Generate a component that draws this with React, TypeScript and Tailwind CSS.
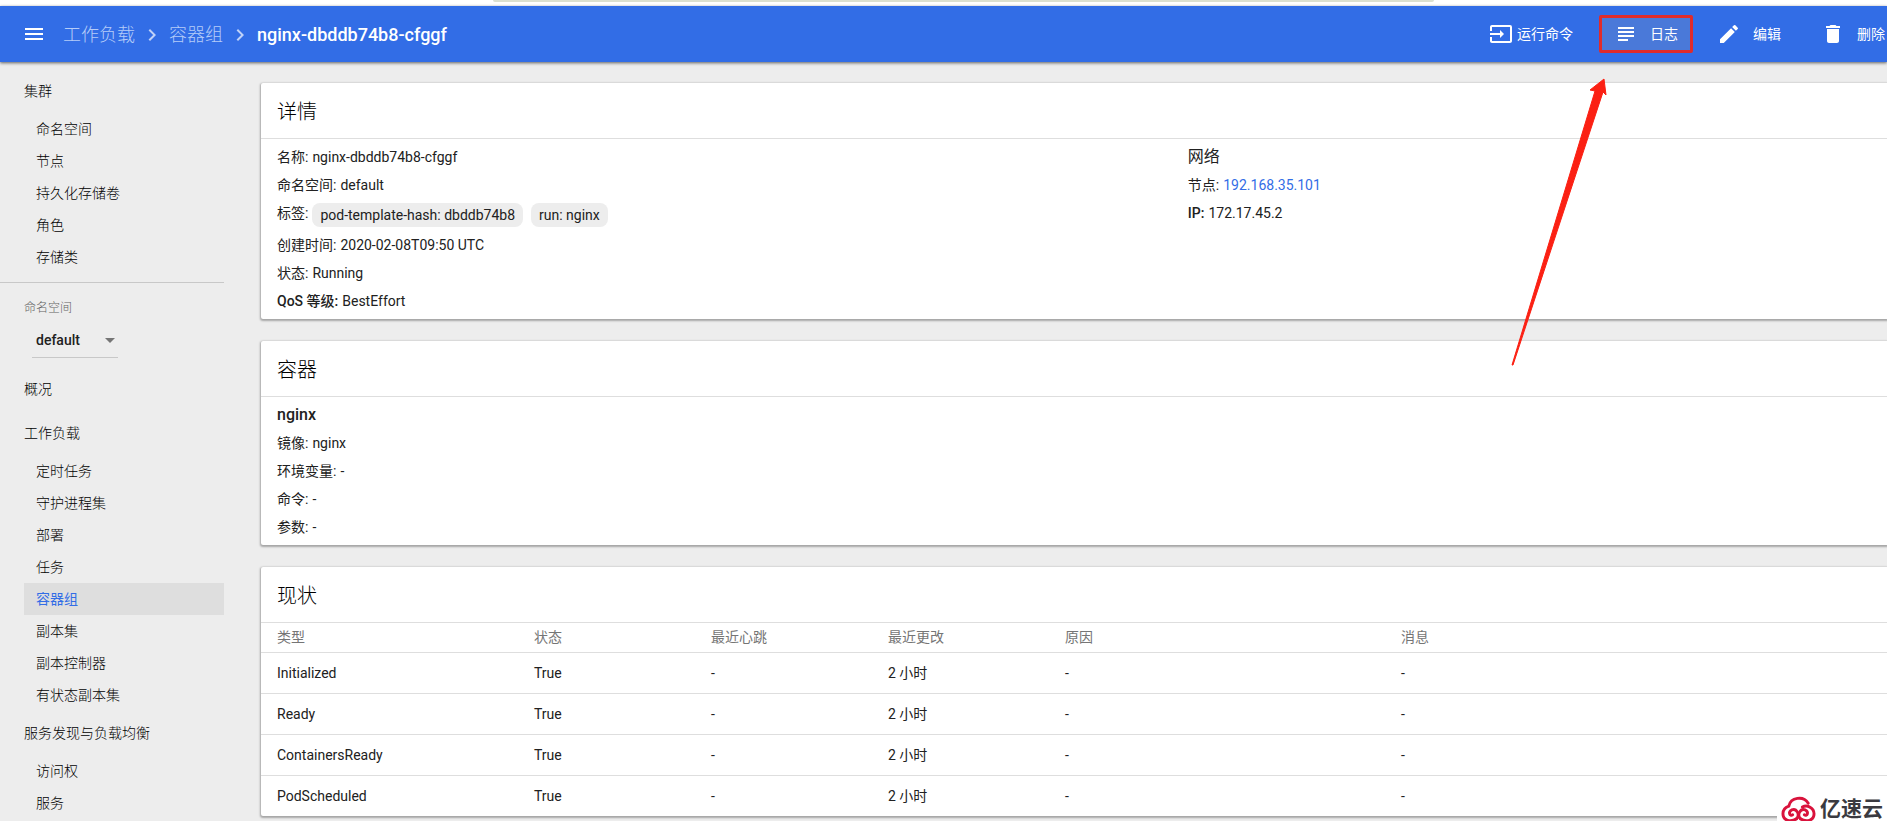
import React, { useState } from "react";
import { MdMenu, MdInput, MdSubject, MdEdit, MdDelete, MdChevronRight, MdArrowDropDown } from "react-icons/md";

const clusterItems = ["命名空间", "节点", "持久化存储卷", "角色", "存储类"];
const workloadItems = ["定时任务", "守护进程集", "部署", "任务", "容器组", "副本集", "副本控制器", "有状态副本集"];
const discoveryItems = ["访问权", "服务"];

const columns = ["类型", "状态", "最近心跳", "最近更改", "原因", "消息"];
const conditions = [
  { type: "Initialized", status: "True", changed: "2 小时" },
  { type: "Ready", status: "True", changed: "2 小时" },
  { type: "ContainersReady", status: "True", changed: "2 小时" },
  { type: "PodScheduled", status: "True", changed: "2 小时" },
];

function NavGroup({ title, items = [], active }: { title: string; items?: string[]; active?: string }) {
  return (
    <div className="pl-6">
      <a href="#" className="flex h-11 items-center">{title}</a>
      {items.map((item) => (
        <a
          key={item}
          href="#"
          className={`flex h-8 items-center pl-3 ${item === active ? "bg-[#dedede] font-normal text-[#326de6]" : ""}`}
        >
          {item}
        </a>
      ))}
    </div>
  );
}

function Card({ title, children }: { title: string; children: React.ReactNode }) {
  return (
    <section className="rounded-l-xs bg-white shadow-[0_1px_2px_1px_rgba(0,0,0,0.3)]">
      <h2 className="flex h-14 items-center border-b border-[#dedede] px-4 pt-0.5 text-xl font-light text-black">{title}</h2>
      {children}
    </section>
  );
}

function Field({ label, latin = false, children }: { label: string; latin?: boolean; children: React.ReactNode }) {
  return (
    <div className="flex min-h-7 gap-1 leading-7">
      <dt className={latin ? "font-medium" : ""}>{label}:</dt>
      <dd>{children}</dd>
    </div>
  );
}

function Chip({ children }: { children: React.ReactNode }) {
  return <span className="rounded-lg bg-[#ededed] px-2 leading-6">{children}</span>;
}

export default function App() {
  const [namespace, setNamespace] = useState("default");

  return (
    <div className="flex min-h-screen flex-col overflow-hidden bg-[#ededed] font-['Roboto','Noto_Sans_CJK_SC',sans-serif] text-sm text-[#212121]">
      {/* Browser edge */}
      <div className="flex h-[6px] justify-center bg-white pl-10">
        <div className="h-[2px] w-[51%] rounded-b-sm bg-[#dbe0d0]"></div>
      </div>

      {/* Toolbar */}
      <header className="relative z-10 flex h-14 items-center justify-between bg-[#326de6] pr-0.5 pl-[22px] text-white shadow-[0_1px_3px_rgba(0,0,0,0.6)]">
        <div className="flex items-center">
          <button aria-label="菜单" className="mr-[17px]">
            <MdMenu size={24} />
          </button>
          <nav className="flex items-center pt-0.5 text-lg">
            <a href="#" className="font-light text-[#b5ccf8]">工作负载</a>
            <MdChevronRight size={24} className="mx-[5px] text-[#c0d2f8]" />
            <a href="#" className="font-light text-[#b5ccf8]">容器组</a>
            <MdChevronRight size={24} className="mx-[5px] text-[#c0d2f8]" />
            <span className="font-medium">nginx-dbddb74b8-cfggf</span>
          </nav>
        </div>

        <div className="flex items-center">
          <button className="mr-[26px] flex items-center gap-1">
            <MdInput size={24} />
            运行命令
          </button>
          <button className="mr-6 flex h-[38px] w-[94px] items-center justify-center gap-3 rounded-xs border-3 border-[#e02b2b] bg-[#4a79d9]">
            <MdSubject size={24} />
            日志
          </button>
          <button className="mr-10 flex items-center gap-3">
            <MdEdit size={24} />
            编辑
          </button>
          <button className="flex items-center gap-3">
            <MdDelete size={24} />
            删除
          </button>
        </div>
      </header>

      <div className="flex flex-1">
        {/* Side navigation */}
        <aside className="w-56 shrink-0 pt-[7px] font-light text-black">
          <NavGroup title="集群" items={clusterItems} />
          <div className="mt-[9px] border-t border-[#c8c8c8] pt-[15px] pb-[9px]">
            <label htmlFor="namespace" className="block pl-6 text-xs leading-5 text-[#616161]">命名空间</label>
            <div className="mt-1 ml-8 flex h-9 w-[86px] items-center border-b border-[#c8c8c8]">
              <select
                id="namespace"
                value={namespace}
                onChange={(e) => setNamespace(e.target.value)}
                className="w-full appearance-none bg-transparent pl-1 font-medium text-[#212121]"
              >
                <option>default</option>
              </select>
              <MdArrowDropDown size={24} className="pointer-events-none -mr-1 -ml-5 shrink-0 text-[#757575]" />
            </div>
          </div>
          <NavGroup title="概况" />
          <NavGroup title="工作负载" items={workloadItems} active="容器组" />
          <NavGroup title="服务发现与负载均衡" items={discoveryItems} />
        </aside>

        <main className="flex flex-1 flex-col gap-[22px] pt-[21px] pl-[37px]">
          <Card title="详情">
            <div className="grid grid-cols-[4fr_3fr] px-4 py-1">
              <dl>
                <Field label="名称">nginx-dbddb74b8-cfggf</Field>
                <Field label="命名空间">default</Field>
                <Field label="标签">
                  <div className="flex gap-2 pt-1 pb-1">
                    <Chip>pod-template-hash: dbddb74b8</Chip>
                    <Chip>run: nginx</Chip>
                  </div>
                </Field>
                <Field label="创建时间">2020-02-08T09:50 UTC</Field>
                <Field label="状态">Running</Field>
                <Field label="QoS 等级" latin>BestEffort</Field>
              </dl>
              <div>
                <h3 className="text-base leading-7">网络</h3>
                <dl>
                  <Field label="节点"><a href="#" className="text-[#326de6]">192.168.35.101</a></Field>
                  <Field label="IP" latin>172.17.45.2</Field>
                </dl>
              </div>
            </div>
          </Card>

          <Card title="容器">
            <div className="px-4 py-1">
              <h3 className="text-base leading-7 font-medium">nginx</h3>
              <dl>
                <Field label="镜像">nginx</Field>
                <Field label="环境变量">-</Field>
                <Field label="命令">-</Field>
                <Field label="参数">-</Field>
              </dl>
            </div>
          </Card>

          <Card title="现状">
            <table className="w-full table-fixed text-left">
              <colgroup>
                <col className="w-[273px]" />
                <col className="w-[177px]" />
                <col className="w-[177px]" />
                <col className="w-[177px]" />
                <col className="w-[336px]" />
                <col />
              </colgroup>
              <thead>
                <tr className="h-[29px] text-[#757575]">
                  {columns.map((name) => (
                    <th key={name} className="font-normal first:pl-4">{name}</th>
                  ))}
                </tr>
              </thead>
              <tbody>
                {conditions.map((row) => (
                  <tr key={row.type} className="h-[41px] border-t border-[#dedede]">
                    <td className="pl-4">{row.type}</td>
                    <td>{row.status}</td>
                    <td>-</td>
                    <td>{row.changed}</td>
                    <td>-</td>
                    <td>-</td>
                  </tr>
                ))}
              </tbody>
            </table>
          </Card>
        </main>
      </div>

      {/* Arrow pointing at the log button */}
      <svg className="pointer-events-none absolute top-[78px] right-[280px] z-20" width="96" height="288" viewBox="0 0 96 288">
        <path d="M1 287 L84 13 L79 12 L93 1 L95 17 L92 14 L2 287 Z" fill="#fb2013" stroke="#fb2013" strokeWidth="1" />
      </svg>

      {/* Site badge */}
      <div className="fixed right-0 bottom-0 z-20 flex h-[27px] items-center gap-1 overflow-hidden bg-white px-1 pt-[3px]">
        <svg width="35" height="26" viewBox="0 0 36 26" fill="none" stroke="#d9133c" strokeWidth="3" strokeLinecap="round">
          <path d="M16 23 C10 27 2 25 2 18 C2 13 5 11 8 10 C10 1 23 -1 28 7" />
          <path d="M16 23 C20 19 16 12 11 14 C7 16 9 21 12 19" />
          <path d="M20 23 C26 27 34 25 34 18 C34 12 27 8 22 11" />
          <path d="M20 23 C16 19 20 12 25 14 C29 16 27 21 24 19" />
        </svg>
        <span className="text-[21px] font-bold text-[#3a3a40]">亿速云</span>
      </div>
    </div>
  );
}
